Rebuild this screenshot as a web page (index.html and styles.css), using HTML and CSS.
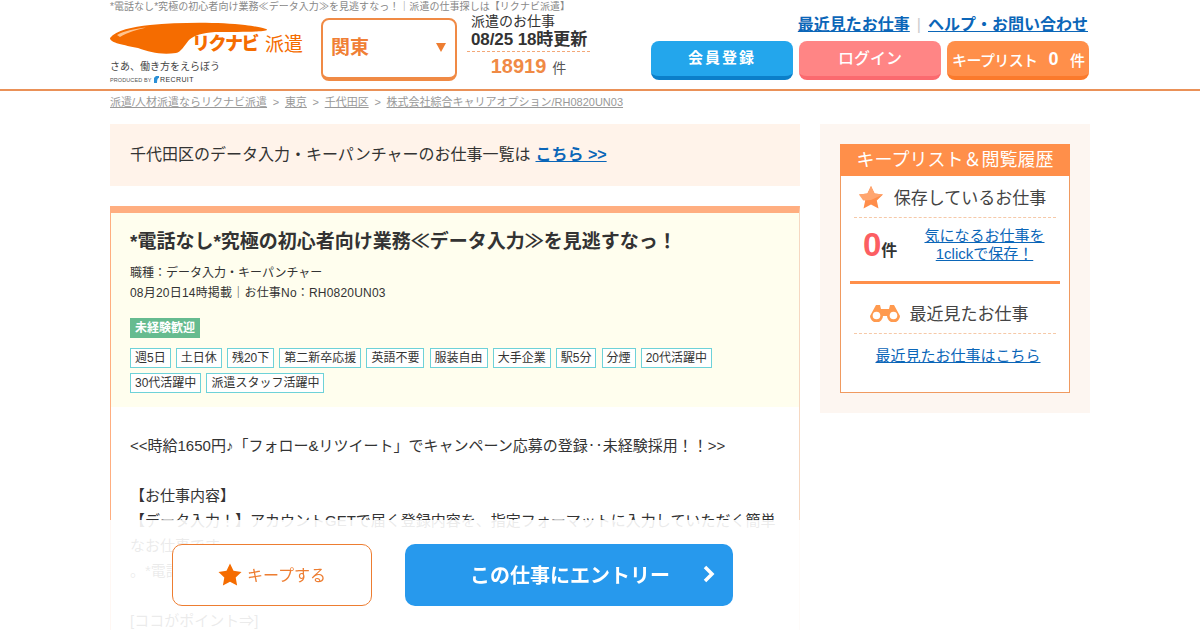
FILE: index.html
```html
<!DOCTYPE html>
<html lang="ja">
  <head>
    <meta charset="UTF-8" />
    <title>リクナビ派遣</title>
    <link rel="stylesheet" href="styles.css">
  </head>
  <body>
    <!-- ヘッダー -->
    <header class="header">
      <div class="header-inner">
        <div class="brand">
          <h1 class="tagline">*電話なし*究極の初心者向け業務≪データ入力≫を見逃すなっ！｜派遣の仕事探しは【リクナビ派遣】</h1>
          <div class="brand-row">
            <div class="logo-col">
              <div class="logo">
                <svg class="swoosh" width="160" height="34" viewBox="0 0 160 34">
                  <path d="M0 16C6 8 22 5 40 3 70 0 110 0 135 3c15 2 23 4 22 5-2 2-27 2-52 2-13 1-20 3-26 8-5 6-8 12-13 13-16 2-26-1-38-5C14 23 0 21 0 16z" fill="#f56c00"/>
                  <path d="M7 13C14 9 24 7 36 5.500 27 8 18 10 10 15z" fill="#ffc48f"/>
                </svg>
                <span class="logo-name">リクナビ</span>
                <span class="logo-sub">派遣</span>
              </div>
              <p class="slogan">さあ、働き方をえらぼう</p>
              <p class="produced">PRODUCED BY
                <svg width="5" height="7" viewBox="0 0 5 7"><path d="M0 7V2q2-3 5-2v2Q3 2 3 7z" fill="#2b8fd6"/></svg><b>RECRUIT</b></p>
            </div>
            <div class="area-select">
              <span>関東</span>
              <i class="area-arrow"></i>
            </div>
            <div class="update">
              <p class="update-label">派遣のお仕事</p>
              <p class="update-date">08/25 18時更新</p>
              <p class="update-count"><b>18919</b> 件</p>
            </div>
          </div>
        </div>
        <div class="header-nav">
          <div class="nav-links">
            <a href="#">最近見たお仕事</a><span class="nav-sep">|</span><a href="#">ヘルプ・お問い合わせ</a>
          </div>
          <div class="nav-buttons">
            <a href="#" class="btn btn-blue">会員登録</a>
            <a href="#" class="btn btn-pink">ログイン</a>
            <a href="#" class="btn btn-orange">キープリスト<b>0</b>件</a>
          </div>
        </div>
      </div>
    </header>

    <div class="page">
      <!-- パンくず -->
      <nav class="crumbs">
        <a href="#">派遣/人材派遣ならリクナビ派遣</a><span>&gt;</span><a href="#">東京</a><span>&gt;</span><a href="#">千代田区</a><span>&gt;</span><a href="#">株式会社綜合キャリアオプション/RH0820UN03</a>
      </nav>

      <div class="columns">
        <main class="main">
          <div class="notice">千代田区のデータ入力・キーパンチャーのお仕事一覧は<a href="#">こちら &gt;&gt;</a></div>

          <article class="job">
            <div class="job-head">
              <h2 class="job-title">*電話なし*究極の初心者向け業務≪データ入力≫を見逃すなっ！</h2>
              <p class="job-meta">職種：データ入力・キーパンチャー</p>
              <p class="job-meta job-meta-no">08月20日14時掲載｜お仕事No：RH0820UN03</p>
              <span class="badge">未経験歓迎</span>
              <ul class="tags">
                <li>週5日</li>
                <li>土日休</li>
                <li>残20下</li>
                <li>第二新卒応援</li>
                <li>英語不要</li>
                <li>服装自由</li>
                <li>大手企業</li>
                <li>駅5分</li>
                <li>分煙</li>
                <li>20代活躍中</li>
                <li>30代活躍中</li>
                <li>派遣スタッフ活躍中</li>
              </ul>
            </div>
            <div class="job-body">
              <p>&lt;&lt;時給1650円♪「フォロー&amp;リツイート」でキャンペーン応募の登録‥未経験採用！！&gt;&gt;</p>
              <br>
              <p>【お仕事内容】</p>
              <p>【データ入力！】アカウントGETで届く登録内容を、指定フォーマットに入力していただく簡単なお仕事です</p>
              <p>。*電話なし*究極の初心者向け</p>
              <br>
              <p>[ココがポイント⇒]</p>
            </div>
          </article>
        </main>

        <aside class="side">
          <div class="side-box">
            <h3 class="side-title">キープリスト＆閲覧履歴</h3>
            <div class="side-head side-head-keep">
              <svg width="26" height="24" viewBox="0 0 26 24">
                <path d="M13 1l3.600 7.600 8.400 1-6.200 5.800 1.700 8.200L13 19.400l-7.500 4.200 1.700-8.200L1 9.600l8.400-1z" fill="#ff8d4a"/>
                <path d="M13 1l3.600 7.600 8.400 1-12 5.400-7.800.4L1 9.600l8.400-1z" fill="#ffa56f"/>
              </svg>
              <span>保存しているお仕事</span>
            </div>
            <div class="side-keep">
              <p class="side-count"><b>0</b>件</p>
              <a href="#">気になるお仕事を<br>1clickで保存！</a>
            </div>
            <div class="side-line"></div>
            <div class="side-head side-head-recent">
              <svg width="30" height="18" viewBox="0 0 30 18">
                <path d="M6 1h4l1 4h8l1-4h4l6 11a6.500 6.500 0 1 1-13 0h-4a6.500 6.500 0 1 1-13 0z" fill="#ff9a4f"/>
                <circle cx="6.500" cy="11.500" r="3.800" fill="#fff"/>
                <circle cx="23.500" cy="11.500" r="3.800" fill="#fff"/>
              </svg>
              <span>最近見たお仕事</span>
            </div>
            <a href="#" class="side-recent">最近見たお仕事はこちら</a>
          </div>
        </aside>
      </div>
    </div>

    <!-- 固定ボタン -->
    <div class="entry-bar">
      <div class="entry-inner">
        <a href="#" class="keep-btn">
          <svg width="24" height="23" viewBox="0 0 24 23">
            <path d="M12 .5l3.500 7.300 8 1.100-5.800 5.600 1.400 8L12 18.700l-7.100 3.800 1.400-8L.5 8.900l8-1.100z" fill="#f56c00"/>
          </svg>
          キープする
        </a>
        <a href="#" class="entry-btn">
          <span>この仕事にエントリー</span>
          <svg width="14" height="18" viewBox="0 0 14 18">
            <path d="M3 2l7 7-7 7" fill="none" stroke="#fff" stroke-width="3.500"/>
          </svg>
        </a>
      </div>
    </div>
  </body>
</html>
```

FILE: styles.css
```css
* {
  margin: 0;
  padding: 0;
  box-sizing: border-box;
}

ul {
  list-style: none;
}

body {
  font-family: "Liberation Sans", "Noto Sans CJK JP", sans-serif;
  color: #333;
  background: #fff;
  height: 630px;
  overflow: hidden;
}

a {
  color: #0b66b8;
}

/* ヘッダー */
.header {
  height: 91px;
  border-bottom: 2px solid #ea9158;
}

.header-inner {
  display: flex;
  justify-content: space-between;
  width: 980px;
  margin: 0 auto;
}

.tagline {
  height: 14px;
  font-size: 10px;
  font-weight: normal;
  line-height: 13px;
  letter-spacing: 0.05px;
  color: #888;
  white-space: nowrap;
}

.brand-row {
  display: flex;
}

.logo-col {
  width: 211px;
  padding-top: 8px;
}

.logo {
  position: relative;
  height: 34px;
}

.swoosh {
  display: block;
}

.logo-name {
  position: absolute;
  left: 82px;
  top: 10px;
  font-size: 18px;
  font-weight: 900;
  line-height: 24px;
  letter-spacing: -1.500px;
  color: #f56c00;
  white-space: nowrap;
}

.logo-sub {
  position: absolute;
  left: 155px;
  top: 11px;
  font-size: 19px;
  line-height: 24px;
  color: #f56c00;
  white-space: nowrap;
}

.slogan {
  margin-top: 4px;
  font-size: 10px;
  line-height: 14px;
  color: #444;
}

.produced {
  height: 11px;
  font-size: 5.500px;
  line-height: 11px;
  letter-spacing: 0.1px;
  color: #555;
}

.produced svg {
  margin: 0 1px 0 1px;
  vertical-align: -1px;
}

.produced b {
  font-size: 7px;
  font-weight: normal;
  letter-spacing: 0.4px;
  color: #333;
}

.area-select {
  display: flex;
  justify-content: space-between;
  align-items: center;
  width: 136px;
  height: 63px;
  margin-top: 4px;
  padding: 0 9px 6px 8px;
  border: 2px solid #f08a45;
  border-bottom-width: 4px;
  border-radius: 8px;
  font-size: 19px;
  font-weight: bold;
  color: #f07f35;
}

.area-arrow {
  width: 0;
  height: 0;
  margin-top: 4px;
  border-top: 9px solid #ed7d31;
  border-left: 5.500px solid transparent;
  border-right: 5.500px solid transparent;
}

.update {
  width: 123px;
  margin-left: 10px;
  margin-top: -1px;
}

.update-label {
  padding-left: 4px;
  font-size: 14px;
  line-height: 17px;
}

.update-date {
  padding-left: 4px;
  font-size: 17px;
  font-weight: bold;
  line-height: 19px;
  letter-spacing: -0.1px;
  white-space: nowrap;
}

.update-count {
  margin-top: 2px;
  padding-top: 1px;
  border-top: 1px dashed #f3a878;
  font-size: 14px;
  line-height: 27px;
  text-align: center;
  color: #555;
}

.update-count b {
  margin-right: 2px;
  font-size: 20px;
  color: #f08a45;
}

.header-nav {
  padding-top: 14px;
  width: 439px;
}

.nav-links {
  height: 27px;
  padding-right: 2px;
  font-size: 16px;
  font-weight: bold;
  line-height: 22px;
  text-align: right;
}

.nav-sep {
  margin: 0 7px;
  font-weight: normal;
  color: #ccc;
}

.nav-buttons {
  display: flex;
  gap: 6px;
}

.btn {
  display: flex;
  justify-content: center;
  align-items: center;
  width: 142px;
  height: 39px;
  padding-bottom: 4px;
  border-radius: 8px;
  border-bottom: 4px solid;
  font-size: 16px;
  font-weight: bold;
  color: #fff;
  text-decoration: none;
  white-space: nowrap;
}

.btn-blue {
  background: #23a6ec;
  border-color: #0b7fc9;
  font-size: 15px;
  letter-spacing: 2px;
}

.btn-pink {
  background: #ff8585;
  border-color: #fb6a6f;
  font-weight: 500;
}

.btn-orange {
  justify-content: flex-start;
  padding: 1px 0 0 5px;
  background: #ff8f4a;
  border-color: #fb7a2c;
  font-size: 15px;
  font-weight: 500;
  letter-spacing: -0.6px;
}

.btn-orange b {
  margin: 0 12px 0 11px;
  font-size: 18px;
}

/* ページ本体 */
.page {
  width: 980px;
  margin: 0 auto;
}

.crumbs {
  display: flex;
  height: 33px;
  padding-top: 4px;
  font-size: 11px;
  line-height: 15px;
  color: #999;
}

.crumbs a {
  color: #999;
}

.crumbs span {
  margin: 0 5.700px;
}

.columns {
  display: flex;
  justify-content: space-between;
  align-items: flex-start;
}

.main {
  width: 690px;
}

.notice {
  height: 62px;
  padding: 20px 20px 0;
  background: #fff3ea;
  font-size: 16px;
  line-height: 22px;
}

.notice a {
  margin-left: 5px;
  font-weight: bold;
}

.job {
  margin-top: 20px;
  border-left: 1px solid #ffae80;
  border-right: 1px solid #f6d8c2;
  border-top: 7px solid #ffae80;
}

.job-head {
  height: 194px;
  padding: 15px 19px 0;
  background: #fffeee;
}

.job-title {
  font-size: 19px;
  line-height: 27px;
  margin-bottom: 8px;
}

.job-meta {
  font-size: 12px;
  line-height: 20px;
}

.job-meta-no {
  letter-spacing: 0.2px;
}

.badge {
  display: block;
  width: 70px;
  height: 20px;
  margin-top: 15px;
  background: #66bb8f;
  font-size: 12px;
  font-weight: bold;
  line-height: 20px;
  text-align: center;
  color: #fff;
}

.tags {
  display: flex;
  flex-wrap: wrap;
  gap: 5px 5.100px;
  margin-top: 10px;
}

.tags li {
  height: 20px;
  padding: 0 4px;
  background: #fff;
  border: 1px solid #6ed2d8;
  font-size: 12px;
  line-height: 18px;
}

.job-body {
  height: 223px;
  overflow: hidden;
  padding: 26px 19px 0;
  font-size: 15px;
  line-height: 25px;
}

/* サイドバー */
.side {
  width: 270px;
  padding: 20px;
  background: #fdf6f1;
}

.side-box {
  height: 249px;
  background: #fff;
  border: 1px solid #f09a60;
  text-align: center;
}

.side-title {
  height: 32px;
  margin: -1px -1px 0;
  background: #ff8f4a;
  font-size: 18px;
  font-weight: normal;
  line-height: 32px;
  color: #fff;
}

.side-head {
  display: flex;
  align-items: center;
  justify-content: center;
  margin: 0 13px;
  border-bottom: 1px dashed #f6c9a8;
  font-size: 17px;
  color: #444;
}

.side-head-keep {
  height: 42px;
  gap: 10px;
  padding-right: 6px;
}

.side-head-recent {
  height: 42px;
  gap: 10px;
  padding-right: 12px;
}

.side-keep {
  display: flex;
  align-items: center;
  height: 63px;
  padding: 0 22px 9px;
}

.side-count {
  width: 59px;
  font-size: 16px;
  font-weight: bold;
  text-align: left;
}

.side-count b {
  font-size: 33px;
  line-height: 36px;
  color: #fc5e62;
}

.side-keep a {
  flex: 1;
  font-size: 15px;
  line-height: 18px;
  white-space: nowrap;
}

.side-line {
  height: 3px;
  margin: 0 9px 8px;
  background: #ff8f4a;
}

.side-recent {
  display: block;
  margin-top: 11px;
  padding-left: 6px;
  font-size: 15px;
  line-height: 22px;
}

/* 固定ボタン */
.entry-bar {
  position: fixed;
  left: 0;
  right: 0;
  bottom: 0;
  height: 110px;
  background: rgba(255, 255, 255, 0.9);
}

.entry-inner {
  display: flex;
  gap: 33px;
  width: 980px;
  margin: 0 auto;
  padding: 24px 0 0 62px;
}

.keep-btn {
  display: flex;
  align-items: center;
  justify-content: center;
  gap: 5px;
  width: 200px;
  height: 62px;
  padding-bottom: 2px;
  background: #fff;
  border: 1px solid #ed7d31;
  border-radius: 10px;
  font-size: 16px;
  color: #ed7d31;
  text-decoration: none;
}

.entry-btn {
  display: flex;
  align-items: center;
  justify-content: space-between;
  width: 328px;
  height: 62px;
  padding: 0 17px 2px 65px;
  background: #2799ed;
  border-radius: 10px;
  font-size: 20px;
  font-weight: bold;
  color: #fff;
  text-decoration: none;
}
```
